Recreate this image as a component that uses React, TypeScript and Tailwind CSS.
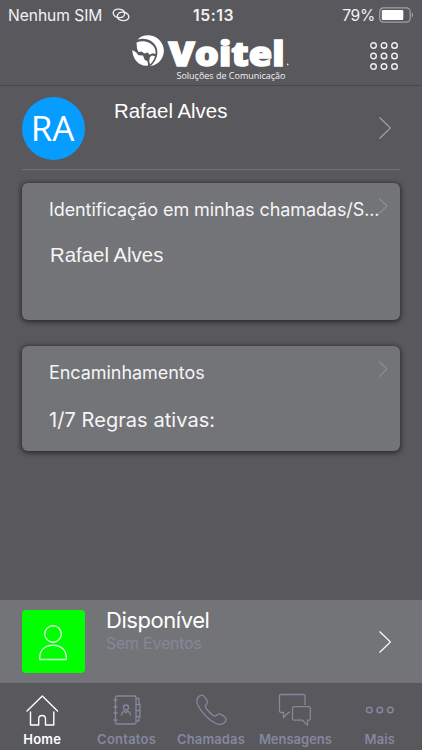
import React from 'react';

type IconProps = { className?: string };

const Chevron: React.FC<IconProps> = ({ className }) => (
  <svg viewBox="0 0 12 22" fill="none" stroke="currentColor" strokeWidth="1.2" className={className}>
    <path d="M0.5 0.5L11.5 11L0.5 21.5" vectorEffect="non-scaling-stroke" />
  </svg>
);

const HotspotIcon: React.FC = () => (
  <svg width="18" height="14" viewBox="0 0 18 14" fill="none" stroke="#eeeef0" strokeWidth="1.4" strokeLinecap="round">
    <path d="M11.2 8.6C9.4 10 5.6 9.9 3.4 8.6C1.2 7.2 0.6 4.6 1.9 2.9C3.5 0.7 8 0.7 10.6 2.2C12.8 3.5 13.3 6 12 7.5" />
    <path d="M6.8 5.1C8.6 3.8 12.4 3.9 14.6 5.2C16.8 6.6 17.4 9.2 16.1 10.9C14.5 13.1 10 13.1 7.4 11.6C5.2 10.3 4.7 7.8 6 6.3" />
  </svg>
);

const StatusBar: React.FC = () => (
  <div className="relative flex h-[30px] items-center justify-between pt-px pr-[8px] pl-[8px] text-[#f2f2f3]">
    <div className="flex items-center gap-[10px]">
      <span className="text-[15.6px] tracking-[-0.05px]">Nenhum SIM</span>
      <HotspotIcon />
    </div>
    <span className="absolute left-[193px] text-[15.8px] font-semibold tracking-[0.55px]">15:13</span>
    <div className="flex items-center gap-[4px]">
      <span className="text-[15.6px] tracking-[-0.3px]">79%</span>
      <svg width="35" height="16" viewBox="0 0 35 16" fill="none">
        <rect x="0.7" y="0.9" width="30.5" height="14.2" rx="3.8" stroke="#a3a3a6" strokeWidth="1.2" />
        <rect x="2.8" y="3" width="21.5" height="10" rx="1.3" fill="#fff" />
        <path d="M32.8 5.6C34.5 6.3 34.5 9.7 32.8 10.4Z" fill="#a3a3a6" />
      </svg>
    </div>
  </div>
);

const Logo: React.FC = () => (
  <svg width="162" height="55" viewBox="0 0 162 55" className="ml-[130px]">
    <g fill="#fff">
      <path d="M7.5 9.5C12 4.5 21 3.6 27 8C34 13 36 22 31.5 29C29 33 25 35.5 20.5 36.2C25.5 31.5 28.5 25.5 27 19C25 10.5 15.5 6.8 7.5 9.5Z" />
      <path d="M6.5 12.5C13 9.5 21 12 24 17C25.5 19.5 26 22 25.4 24L22.5 23.2L19.5 24.8L17.8 22.4L14.5 23.6L11.5 21.6L8.5 22L7 18.5Z" />
      <path d="M2.2 20L6 22.2L8.5 25.2L13 25.6L14.5 29.5L17.5 31.5L18.2 35.6C9.5 36.8 2.8 30 2.2 20Z" />
      <path d="M20 27L22 25.4L25 26.2C24.2 29.6 22.3 32.4 20 34.4L19.2 30.5Z" />
    </g>
    <text x="38.5" y="36" textLength="116" lengthAdjust="spacingAndGlyphs" fill="#fff" stroke="#fff" strokeWidth="1.4" className="font-['Open_Sans'] text-[33px] font-extrabold">Voitel</text>
    <circle cx="157.7" cy="34.5" r="0.9" fill="#ddd" />
    <text x="46.5" y="49" textLength="109" lengthAdjust="spacingAndGlyphs" fill="#f2f2f2" className="font-['Open_Sans'] text-[9px]">Soluções de Comunicação</text>
  </svg>
);

const dots = [0, 1, 2];

const GridIcon: React.FC = () => (
  <svg width="28" height="28" viewBox="0 0 28 28" fill="none" stroke="#f0f0f1" strokeWidth="1.4">
    {dots.map(row => dots.map(col => (
      <circle key={`${row}-${col}`} cx={3.5 + col * 10.5} cy={3.5 + row * 10.5} r="2.8" />
    )))}
  </svg>
);

const Card: React.FC<{ title: string; titleClass: string; text: React.ReactNode; className: string }> = ({ title, titleClass, text, className }) => (
  <section className={`relative rounded-[6px] bg-[#737477] pl-[27px] text-[#f5f5f6] shadow-[0_1px_5px_1px_rgba(0,0,0,0.55)] ${className}`}>
    <h2 className={`text-[18px] leading-[22px] whitespace-nowrap ${titleClass}`}>{title}</h2>
    {text}
    <Chevron className="absolute top-[15px] right-[12px] h-[16px] w-[10px] text-[#8b8d9e]" />
  </section>
);

const PersonIcon: React.FC = () => (
  <svg width="30" height="38" viewBox="0 0 30 38" fill="none" stroke="#d5ffd5" strokeWidth="1.4">
    <circle cx="14" cy="11" r="8.3" />
    <path d="M0.8 36.5C0 27 6 22.2 14 22.2S28 27 27.2 36.5Z" strokeLinejoin="round" />
  </svg>
);

const HomeIcon: React.FC = () => (
  <svg width="34" height="34" viewBox="0 0 34 34" fill="none" stroke="currentColor" strokeWidth="1.4" strokeLinecap="round" strokeLinejoin="round">
    <path d="M2 18L17.3 3L32.5 18" />
    <path d="M5.5 19V32H13.7V26C13.7 21.3 20.5 21.3 20.5 26V32H28.8V19" />
  </svg>
);

const ContactsIcon: React.FC = () => (
  <svg width="34" height="34" viewBox="0 0 34 34" fill="none" stroke="currentColor" strokeWidth="1.3">
    <rect x="5.5" y="3" width="20.5" height="28" rx="1.5" />
    <path d="M3.5 7H7.5M3.5 14H7.5M3.5 20H7.5M3.5 27H7.5" />
    <path d="M26 5.5H29V11.5H26M26 11.5H30V17.5H26M26 17.5H30V23.5H26M26 23.5H29V28H26" />
    <circle cx="16" cy="14.5" r="2.5" />
    <path d="M11.5 22.5C11.5 19.5 13 18.7 14.5 18.2L16 20L17.5 18.2C19 18.7 20.5 19.5 20.5 22.5" />
  </svg>
);

const PhoneIcon: React.FC = () => (
  <svg width="34" height="34" viewBox="0 0 34 34" fill="none" stroke="currentColor" strokeWidth="1.3" strokeLinejoin="round">
    <path d="M4 4.5C6.2 1.6 9 1.4 10.8 4L12.8 7.3C14 9.3 13.2 10.6 11.8 12C10.8 13.2 11.4 14.4 12.6 16C14.4 18.4 16.4 20.4 18.8 22.2C20.2 23.3 21.3 23.5 22.5 22.3C24 20.9 25.3 20.4 27 21.4L30.3 23.5C32.9 25.3 32.6 28 29.7 30.2C26.5 32.6 21 30.8 16 26.8C10.5 22.3 6.3 17 3.9 12C2.5 9 2.5 6.5 4 4.5Z" />
  </svg>
);

const MessagesIcon: React.FC = () => (
  <svg width="34" height="34" viewBox="0 0 34 34" fill="none" stroke="currentColor" strokeWidth="1.3" strokeLinejoin="round">
    <path d="M27 12V3Q27 1.5 25.5 1.5H3Q1.5 1.5 1.5 3V18Q1.5 19.5 3 19.5H5.5V24.5L10.5 19.5H12" />
    <path d="M16 13.7H30.8Q32.3 13.7 32.3 15.2V25.7Q32.3 27.2 30.8 27.2H29.5V32.3L24.5 27.2H16Q14.5 27.2 14.5 25.7V15.2Q14.5 13.7 16 13.7Z" />
  </svg>
);

const MoreIcon: React.FC = () => (
  <svg width="34" height="34" viewBox="0 0 34 34" fill="none" stroke="currentColor" strokeWidth="1.4">
    {dots.map(i => <circle key={i} cx={6.3 + i * 10.5} cy="17" r="2.8" />)}
  </svg>
);

const tabs = [
  { label: 'Home', Icon: HomeIcon, color: 'text-white', tracking: 'tracking-[0.2px]' },
  { label: 'Contatos', Icon: ContactsIcon, color: 'text-[#8587a0]', tracking: 'tracking-[0.25px]' },
  { label: 'Chamadas', Icon: PhoneIcon, color: 'text-[#8587a0]', tracking: 'tracking-[0.15px]' },
  { label: 'Mensagens', Icon: MessagesIcon, color: 'text-[#8587a0]', tracking: 'tracking-[-0.02px]' },
  { label: 'Mais', Icon: MoreIcon, color: 'text-[#8587a0]', tracking: 'tracking-[0.1px]' },
];

export default function App() {
  return (
    <div className="flex h-[750px] w-[422px] flex-col overflow-hidden bg-[#59585c] font-[Inter,sans-serif] text-white">
      {/* Header */}
      <header className="h-[86px] shrink-0 border-b border-[#49484c]">
        <StatusBar />
        <div className="flex items-start">
          <Logo />
          <div className="ml-[78px] pt-[12px]">
            <GridIcon />
          </div>
        </div>
      </header>

      <main className="flex-1 px-[22px] pt-[11px]">
        {/* Profile */}
        <div className="flex h-[73px] border-b border-[#717175]">
          <div className="flex size-[63px] items-center justify-center rounded-full bg-[#079cff] pr-[2px] font-['Open_Sans'] text-[35px]">
            RA
          </div>
          <span className="ml-[29px] pt-[2px] font-['Liberation_Sans'] text-[20.4px] leading-[24px]">Rafael Alves</span>
          <Chevron className="mt-[20px] mr-[9px] ml-auto h-[22px] w-[12px] text-[#9fa1b0]" />
        </div>

        <Card
          title="Identificação em minhas chamadas/S..."
          titleClass="tracking-[-0.09px]"
          className="mt-[13px] h-[137px] pt-[16px]"
          text={<p className="mt-[22px] ml-[1px] font-['Liberation_Sans'] text-[20.4px] leading-[24px]">Rafael Alves</p>}
        />
        <Card
          title="Encaminhamentos"
          titleClass="tracking-[-0.05px]"
          className="mt-[26px] h-[105px] pt-[16px]"
          text={<p className="mt-[23px] text-[20px] leading-[26px] tracking-[0.06px]">1/7 Regras ativas:</p>}
        />
      </main>

      {/* Presence */}
      <div className="flex h-[83px] shrink-0 bg-[#737477] pt-[10px] pl-[22px]">
        <div className="flex size-[63px] items-center justify-center rounded-[4px] bg-[#00ff00]">
          <PersonIcon />
        </div>
        <div className="ml-[21px]">
          <p className="mt-[-3px] text-[22px] leading-[26px] tracking-[-0.45px]">Disponível</p>
          <p className="text-[16px] leading-[20px] tracking-[-0.25px] text-[#85879b]">Sem Eventos</p>
        </div>
        <Chevron className="mt-[21px] mr-[31px] ml-auto h-[22px] w-[12px] text-white" />
      </div>

      <nav className="grid h-[67px] shrink-0 grid-cols-5 pt-[10px]">
        {tabs.map(({ label, Icon, color, tracking }) => (
          <div key={label} className={`flex flex-col items-center ${color}`}>
            <Icon />
            <span className={`mt-[4px] text-[13px] leading-[16px] font-semibold ${tracking}`}>{label}</span>
          </div>
        ))}
      </nav>
    </div>
  );
}
